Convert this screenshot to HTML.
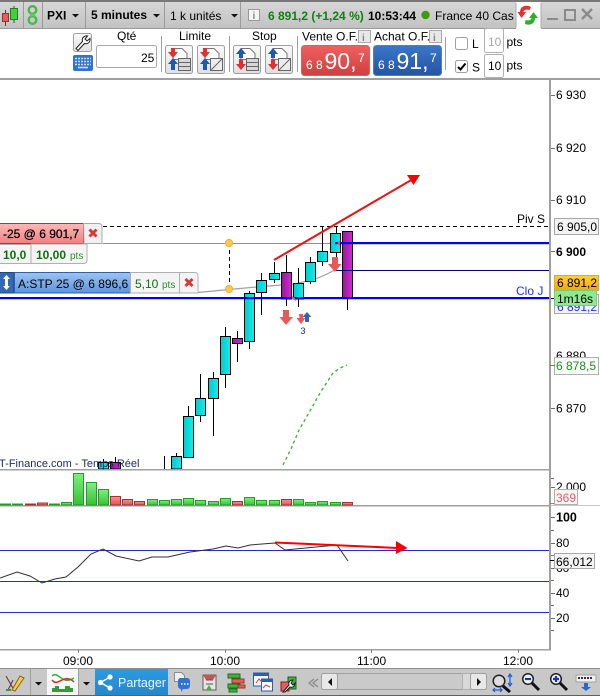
<!DOCTYPE html>
<html><head><meta charset="utf-8">
<style>
html,body{margin:0;padding:0;background:#fff;width:600px;height:696px;overflow:hidden}
svg{display:block;font-family:"Liberation Sans",sans-serif;font-size:12px}
text{fill:#000}
</style></head><body>
<svg width="600" height="696" viewBox="0 0 600 696" xmlns="http://www.w3.org/2000/svg">
<defs>
<linearGradient id="bar" x1="0" y1="0" x2="0" y2="1"><stop offset="0" stop-color="#d8d8d8"/><stop offset="1" stop-color="#c2c2c2"/></linearGradient>
<linearGradient id="cy" x1="0" y1="0" x2="1" y2="0"><stop offset="0" stop-color="#00cccc"/><stop offset="1" stop-color="#18eaea"/></linearGradient>
<linearGradient id="mg" x1="0" y1="0" x2="1" y2="0"><stop offset="0" stop-color="#98189c"/><stop offset="1" stop-color="#d02cd0"/></linearGradient>
<linearGradient id="gv" x1="0" y1="0" x2="0" y2="1"><stop offset="0" stop-color="#80ee80"/><stop offset="1" stop-color="#38c038"/></linearGradient>
<linearGradient id="rv" x1="0" y1="0" x2="0" y2="1"><stop offset="0" stop-color="#f89090"/><stop offset="1" stop-color="#d85858"/></linearGradient>
<linearGradient id="redb" x1="0" y1="0" x2="0" y2="1"><stop offset="0" stop-color="#f06060"/><stop offset="1" stop-color="#d04040"/></linearGradient>
<linearGradient id="blub" x1="0" y1="0" x2="0" y2="1"><stop offset="0" stop-color="#3c76c8"/><stop offset="1" stop-color="#2454a4"/></linearGradient>
<linearGradient id="ordr" x1="0" y1="0" x2="0" y2="1"><stop offset="0" stop-color="#ffb8b8"/><stop offset="1" stop-color="#f08080"/></linearGradient>
<linearGradient id="ordb" x1="0" y1="0" x2="0" y2="1"><stop offset="0" stop-color="#9cc4f0"/><stop offset="1" stop-color="#5c94e0"/></linearGradient>
<linearGradient id="btn" x1="0" y1="0" x2="0" y2="1"><stop offset="0" stop-color="#fafafa"/><stop offset="1" stop-color="#e0e0e0"/></linearGradient>
<linearGradient id="ylw" x1="0" y1="0" x2="0" y2="1"><stop offset="0" stop-color="#ffd040"/><stop offset="1" stop-color="#f0a800"/></linearGradient>
<linearGradient id="share" x1="0" y1="0" x2="0" y2="1"><stop offset="0" stop-color="#2e9ae0"/><stop offset="1" stop-color="#2288d0"/></linearGradient>
</defs>

<!-- top bar -->
<rect x="0" y="0" width="600" height="29" fill="url(#bar)"/>
<rect x="0" y="0" width="600" height="2" fill="#787878"/>
<rect x="0" y="28" width="516" height="1" fill="#9a9a9a"/>
<rect x="541" y="28" width="59" height="1" fill="#9a9a9a"/>
<g stroke="#9a9a9a"><path d="M23.500 2V28M42.500 2V28M85.500 2V28M164.500 2V28M240.500 2V28"/></g>
<!-- candle icon -->
<g stroke="#444" stroke-width="1"><path d="M5.500 10V26M14 6V23"/></g>
<rect x="2.500" y="13.500" width="6" height="8" fill="#e06060" stroke="#a03030"/>
<rect x="10.500" y="8.500" width="7" height="11" fill="#40d040" stroke="#208020"/>
<!-- link icon -->
<g fill="none" stroke="#48b848" stroke-width="2.400"><circle cx="32.500" cy="10" r="3.800"/><circle cx="32.500" cy="20" r="3.800"/></g>
<path d="M30 14l5 2M35 14l-5 2" stroke="#70c070" stroke-width="2"/>
<text x="47" y="19.500" font-weight="bold">PXI</text>
<path d="M72 14h7l-3.500 3.500z M153 14h7l-3.500 3.500z M231 14h7l-3.500 3.500z" fill="#111"/>
<text x="91" y="19" font-weight="bold">5 minutes</text>
<text x="170" y="20">1 k unités</text>
<rect x="248.500" y="9.500" width="11" height="11" fill="#f4f4f4" stroke="#999"/>
<text x="252.500" y="19" font-size="10" font-weight="bold" style="fill:#888">i</text>
<text x="268" y="20" font-weight="bold" style="fill:#108010">6 891,2 (+1,24 %)</text>
<text x="368" y="20" font-weight="bold">10:53:44</text>
<circle cx="425.500" cy="15" r="4.200" fill="#409a10"/>
<text x="435" y="20">France 40 Cas</text>
<!-- refresh tab -->
<rect x="516" y="2" width="25" height="28" fill="#fff"/>
<path d="M516 3V28M541 3V28" stroke="#aaa"/>
<path d="M531 7c-6-3-11 0-11 5h-2.500l4 6 4.500-6h-2.500c0-2 3-3 6-2z" fill="#e83030"/>
<path d="M525 24c6 2 10-1 10-6h3l-4.500-6-4.500 6h2.500c0 2-3 3-6 2z" fill="#28b428"/>
<!-- window buttons -->
<rect x="547" y="18" width="11" height="2" fill="#8a8a8a"/>
<rect x="565" y="10" width="10" height="10" fill="none" stroke="#8a8a8a" stroke-width="2"/>
<path d="M582 9l10 10M592 9l-10 10" stroke="#8a8a8a" stroke-width="2.400"/>

<!-- order toolbar -->
<rect x="73.500" y="33.500" width="18" height="18" rx="2" fill="url(#btn)" stroke="#a0a0a0"/>
<path d="M76 48.500l6.500-7c-1-3.500 1.500-6 5-5.500l-2.500 3 2 2 3-2.500c.5 3.500-2 6-5.500 5l-6.500 7z" fill="#fff" stroke="#222" stroke-width="1"/>
<rect x="73" y="55" width="20" height="16" rx="2" fill="#2f74d0"/>
<g stroke="#cfe0f8" stroke-width="1.600" stroke-dasharray="2 1"><path d="M75 58.500h16M75 61.500h16M75 64.500h16"/><path d="M78 67.500h10" stroke-dasharray="none"/></g>
<text x="117" y="40">Qté</text>
<rect x="96.500" y="45.500" width="60" height="22" rx="2" fill="#fff" stroke="#a8a8a8"/>
<text x="141" y="62">25</text>
<path d="M161.500 36V72M229.500 36V72M297.500 36V72M445.500 37V70" stroke="#a0a0a0"/>
<text x="179" y="40">Limite</text>
<text x="252" y="40">Stop</text>
<g>
<rect x="165.500" y="45.500" width="27" height="28" rx="2" fill="url(#btn)" stroke="#a0a0a0"/>
<path d="M173 48.500h9l5 5v6h-14z" fill="#fff" stroke="#777"/>
<path d="M168 52h3v-4h4v4h3l-5 6z" fill="#e03030"/>
<path d="M168 64l5-6 5 6h-3v6h-4v-6z" fill="#1c5cb0"/>
<rect x="178.500" y="58.500" width="12" height="12" fill="#d8d8d8" stroke="#666"/><path d="M178 62.500h12M178 66.500h12" stroke="#666"/>
</g>
<g>
<rect x="197.500" y="45.500" width="27" height="28" rx="2" fill="url(#btn)" stroke="#a0a0a0"/>
<path d="M205 48.500h9l5 5v6h-14z" fill="#fff" stroke="#777"/>
<path d="M200 52h3v-4h4v4h3l-5 6z" fill="#e03030"/>
<path d="M200 64l5-6 5 6h-3v6h-4v-6z" fill="#1c5cb0"/>
<rect x="210.500" y="58.500" width="12" height="12" fill="#ececec" stroke="#666"/><path d="M211 70l11-11" stroke="#666"/>
</g>
<g>
<rect x="233.500" y="45.500" width="27" height="28" rx="2" fill="url(#btn)" stroke="#a0a0a0"/>
<path d="M241 48.500h9l5 5v6h-14z" fill="#fff" stroke="#777"/>
<path d="M236 54l5-6 5 6h-3v4h-4v-4z" fill="#1c5cb0"/>
<path d="M236 64h3v-5h4v5h3l-5 6z" fill="#e03030"/>
<rect x="246.500" y="58.500" width="12" height="12" fill="#d8d8d8" stroke="#666"/><path d="M246 62.500h12M246 66.500h12" stroke="#666"/>
</g>
<g>
<rect x="265.500" y="45.500" width="27" height="28" rx="2" fill="url(#btn)" stroke="#a0a0a0"/>
<path d="M273 48.500h9l5 5v6h-14z" fill="#fff" stroke="#777"/>
<path d="M268 54l5-6 5 6h-3v4h-4v-4z" fill="#1c5cb0"/>
<path d="M268 64h3v-5h4v5h3l-5 6z" fill="#e03030"/>
<rect x="278.500" y="58.500" width="12" height="12" fill="#ececec" stroke="#666"/><path d="M279 70l11-11" stroke="#666"/>
</g>
<text x="302" y="40.500">Vente O.F.</text>
<rect x="358.500" y="30.500" width="12" height="12" fill="#e8e8e8" stroke="#aaa"/><text x="362" y="41" font-size="10" font-weight="bold" style="fill:#888">i</text>
<text x="374" y="40.500">Achat O.F.</text>
<rect x="429.500" y="30.500" width="12" height="12" fill="#e8e8e8" stroke="#aaa"/><text x="433" y="41" font-size="10" font-weight="bold" style="fill:#888">i</text>
<rect x="301.500" y="45.500" width="68" height="30" rx="3" fill="url(#redb)" stroke="#d86060"/>
<rect x="373.500" y="45.500" width="68" height="30" rx="3" fill="url(#blub)" stroke="#5080c0"/>
<text x="306" y="69" style="fill:#fff" font-size="12">6</text><text x="316" y="69" style="fill:#fff" font-size="12">8</text>
<text x="324.500" y="69" style="fill:#fff" font-size="23">90,</text><text x="358" y="62" style="fill:#fff" font-size="12">7</text>
<text x="378" y="69" style="fill:#fff" font-size="12">6</text><text x="388" y="69" style="fill:#fff" font-size="12">8</text>
<text x="396.500" y="69" style="fill:#fff" font-size="23">91,</text><text x="430" y="62" style="fill:#fff" font-size="12">7</text>
<rect x="455.500" y="37.500" width="12" height="12" rx="2" fill="#fff" stroke="#a0a0a0"/>
<text x="472" y="48">L</text>
<rect x="484.500" y="28.500" width="19" height="24" rx="2" fill="#fff" stroke="#b0b0b0"/>
<text x="488" y="46" style="fill:#a8a8a8">10</text>
<text x="506.500" y="46">pts</text>
<rect x="455.500" y="60.500" width="12" height="12" rx="2" fill="#fff" stroke="#a0a0a0"/>
<path d="M458 67l2.500 2.500 5-6" fill="none" stroke="#000" stroke-width="2"/>
<text x="472" y="71.500">S</text>
<rect x="484.500" y="54.500" width="19" height="23" rx="2" fill="#fff" stroke="#b0b0b0"/>
<text x="488" y="70">10</text>
<text x="506.500" y="69.500">pts</text>
<rect x="0" y="78" width="600" height="2" fill="#a0a0a0"/>

<!-- chart lines -->
<path d="M103 226.500H549" stroke="#000" stroke-dasharray="4 3"/>
<path d="M103 243.500H335" stroke="#909090"/>
<path d="M198 292.500L229 289.500L262 286.500L295 284L315 279L325 275L335 270" fill="none" stroke="#a0a0a0" stroke-width="1.200"/>
<path d="M229.500 243V289" stroke="#000" stroke-dasharray="4 3"/>
<circle cx="229" cy="243" r="3.600" fill="#fcc84c" stroke="#e8b040"/>
<circle cx="229" cy="289" r="3.600" fill="#fcc84c" stroke="#e8b040"/>

<!-- wicks -->
<g stroke="#000" stroke-width="1">
<path d="M103.500 459V469M115.500 457V469M164.500 456V469M176.500 453V456M188.500 406V416M200.500 374V422M213.500 372V436M225.500 327V388M237.500 331V362M249.500 291V349M261.500 273V315M274.500 262V283M286.500 255V306M298.500 268V307M310.500 257V284M322.500 226V266M336.500 226V262M347.500 298V310"/>
</g>
<!-- bodies -->
<g stroke="#000" stroke-width="1">
<g fill="url(#cy)">
<rect x="98.500" y="462.500" width="10" height="6.500"/>
<rect x="171.500" y="456.500" width="10" height="12.500"/>
<rect x="183.500" y="416.500" width="10" height="41"/>
<rect x="195.500" y="398.500" width="10" height="17"/>
<rect x="208.500" y="378.500" width="10" height="20"/>
<rect x="220.500" y="336.500" width="10" height="38"/>
<rect x="244.500" y="293.500" width="10" height="48"/>
<rect x="256.500" y="280.500" width="10" height="12"/>
<rect x="269.500" y="273.500" width="10" height="6"/>
<rect x="293.500" y="283.500" width="10" height="15.500"/>
<rect x="305.500" y="262.500" width="10" height="19"/>
<rect x="317.500" y="251.500" width="10" height="10"/>
<rect x="330.500" y="233.500" width="10" height="19"/>
</g>
<g fill="url(#mg)">
<rect x="110.500" y="462.500" width="10" height="6.500"/>
<rect x="232.500" y="338.500" width="10" height="5"/>
<rect x="281.500" y="272.500" width="10" height="26.500"/>
<rect x="342.500" y="231.500" width="10" height="66.500"/>
</g>
</g>

<!-- horizontal levels -->
<rect x="0" y="297" width="549" height="2.200" fill="#0000f0"/>
<rect x="335" y="242" width="214" height="2.200" fill="#0000f0"/>
<path d="M335 270.500H549" stroke="#000080"/>

<!-- trade lines -->
<path d="M274 260L413 179" stroke="#f01010" stroke-width="2" fill="none"/>
<path d="M407 175H420L413.500 185z" fill="#f80000"/>
<path d="M283 465L291 449L299 430L310 411L320 393L333 373L340 368L347 365" fill="none" stroke="#30b030" stroke-width="1.300" stroke-dasharray="3 3"/>

<!-- arrows -->
<path d="M283 310h6v7h4l-7 8-6.500-8h3.500z" fill="#e85858"/>
<path d="M299 314h4v4h2.500l-4.500 6-4.500-6h3z" fill="#e85858"/>
<path d="M307 312l4.500 5h-2.500v5h-4v-5h-2.500z" fill="#3068b0"/>
<path d="M332 257h6v7h3.500l-6.500 8-7-8h4z" fill="#e85858"/>
<path d="M292 296l3 2 1 3-4-2z" fill="#e85858"/>
<path d="M340 241l-3 2 3 3z" fill="#e85858"/>
<text x="300.500" y="334" font-size="9" style="fill:#203050">3</text>

<!-- order label 1 -->
<rect x="-2" y="223.500" width="85.500" height="20" fill="url(#ordr)" stroke="#b83030"/>
<text x="3" y="238" stroke="#000" stroke-width=".25">-25 @ 6 901,7</text>
<path d="M83.500 223.500H99a3 3 0 0 1 3 3V243.500H84z" fill="#f0f0f0" stroke="#a8a8a8"/>
<path d="M89.500 229.500l7 7M96.500 229.500l-7 7" stroke="#d83838" stroke-width="3"/>
<path d="M-2 244.500H84V263.500H-2z" fill="#f4f4f4" stroke="#b0b0b0"/>
<path d="M31 244H87V260a3 3 0 0 1-3 3.500H31z" fill="#f4f4f4" stroke="#b0b0b0"/>
<text x="3" y="259" style="fill:#107010" font-weight="bold">10,0</text>
<text x="36" y="259" style="fill:#107010" font-weight="bold">10,00</text>
<text x="70" y="259" style="fill:#28902c" font-size="10">pts</text>

<!-- order label 2 -->
<rect x="-2" y="272.500" width="16" height="20.500" fill="#3468b4" stroke="#204880"/>
<path d="M6.500 275l3.500 4h-2v7h2l-3.500 4-3.500-4h2v-7h-2z" fill="#fff"/>
<rect x="14.500" y="272.500" width="116" height="20.500" fill="url(#ordb)" stroke="#3060a8"/>
<text x="18" y="288">A:STP</text><text x="56" y="288">25 @ 6 896,6</text>
<path d="M130.500 272.500H195a3 3 0 0 1 3 3V293H130.500z" fill="#f4f4f4" stroke="#b0b0b0"/>
<path d="M179.500 272.500V293" stroke="#b0b0b0"/>
<text x="135" y="288" style="fill:#107010">5,10</text><text x="162" y="288" font-size="10" style="fill:#28902c">pts</text>
<path d="M185.500 279l7 7M192.500 279l-7 7" stroke="#d83838" stroke-width="3"/>

<text x="517" y="223">Piv S</text>
<text x="516" y="295" style="fill:#2030f0">Clo J</text>

<!-- right axis -->
<rect x="549" y="80" width="2" height="569" fill="#a0a0a0"/>
<path d="M551 95.500h4M551 148.500h4M551 200.500h4M551 251.500h4M551 408.500h4" stroke="#707070"/>
<path d="M551 298.500h4" stroke="#000"/>
<text x="556" y="99">6 930</text>
<text x="556" y="152">6 920</text>
<text x="556" y="204">6 910</text>
<text x="556" y="256" font-weight="bold">6 900</text>
<text x="556" y="360">6 880</text>
<text x="556" y="412.500">6 870</text>
<rect x="554.500" y="218.500" width="44" height="16" fill="#f4f4f4" stroke="#a8a8a8"/>
<text x="557" y="231">6 905,0</text>
<rect x="554.500" y="294.500" width="44" height="19" fill="#f4f4f4" stroke="#a8a8a8"/>
<text x="557" y="311" style="fill:#2030f0">6 891,2</text>
<rect x="554.500" y="275.500" width="44" height="15" fill="url(#ylw)" stroke="#e0a820"/>
<text x="557" y="287">6 891,2</text>
<rect x="554.500" y="290.500" width="42" height="15" fill="#90e890" stroke="#80c880"/>
<text x="557" y="303">1m16s</text>
<rect x="554.500" y="357.500" width="44" height="17" fill="#fafafa" stroke="#b0b0b0"/>
<path d="M550 365.500h5" stroke="#30a030"/>
<text x="556" y="370" style="fill:#209020">6 878,5</text>

<!-- separators -->
<rect x="0" y="469" width="549" height="1.500" fill="#a0a0a0"/>
<rect x="0" y="505" width="549" height="1.500" fill="#a0a0a0"/>
<rect x="551" y="505" width="49" height="1" fill="#c8c8c8"/>
<rect x="549" y="469" width="2" height="37" fill="#a0a0a0"/>

<!-- volumes -->
<g stroke-width="1">
<g fill="url(#gv)" stroke="#20a020">
<rect x="0.500" y="504" width="10" height="1"/><rect x="12.500" y="504" width="10" height="1"/>
<rect x="49.500" y="504" width="10" height="1"/><rect x="61.500" y="502.500" width="10" height="2.500"/>
<rect x="73.500" y="473.500" width="10" height="31.500"/><rect x="86.500" y="482.500" width="10" height="22.500"/><rect x="98.500" y="489.500" width="10" height="15.500"/>
<rect x="147.500" y="499.500" width="10" height="5.500"/><rect x="159.500" y="500.500" width="10" height="4.500"/><rect x="171.500" y="499.500" width="10" height="5.500"/><rect x="183.500" y="498.500" width="10" height="6.500"/><rect x="195.500" y="500.500" width="10" height="4.500"/><rect x="208.500" y="501.500" width="10" height="3.500"/><rect x="220.500" y="498.500" width="10" height="6.500"/>
<rect x="244.500" y="497.500" width="10" height="7.500"/><rect x="256.500" y="500.500" width="10" height="4.500"/><rect x="269.500" y="500.500" width="10" height="4.500"/><rect x="293.500" y="499.500" width="10" height="5.500"/><rect x="305.500" y="502.500" width="10" height="2.500"/><rect x="317.500" y="501.500" width="10" height="3.500"/><rect x="330.500" y="502.500" width="10" height="2.500"/>
</g>
<g fill="url(#rv)" stroke="#a83030">
<rect x="25.500" y="504" width="10" height="1"/><rect x="37.500" y="503" width="10" height="2"/>
<rect x="110.500" y="496.500" width="10" height="8.500"/><rect x="122.500" y="499.500" width="10" height="5.500"/><rect x="134.500" y="501.500" width="10" height="3.500"/>
<rect x="232.500" y="501.500" width="10" height="3.500"/><rect x="281.500" y="499.500" width="10" height="5.500"/><rect x="342.500" y="502.500" width="10" height="2.500"/>
</g>
</g>
<path d="M551 478.500h3M551 487.500h4" stroke="#707070"/>
<path d="M550 503.500h5" stroke="#e06060"/>
<text x="556" y="491">2 000</text>
<rect x="554.500" y="489.500" width="23" height="15" fill="#f4f4f4" stroke="#b0b0b0"/>
<text x="556" y="502" style="fill:#e06070">369</text>

<!-- RSI -->
<path d="M0 550.500H549M0 581.500H549M0 612.500H549" stroke="#2828d8" stroke-width="1"/>
<polyline points="0,578 17,572 30,576 42,583 55,579 66,577 78,567 91,554 103,549 116,556 139,561 152,557 168,557 190,552 213,549 226,546 238,548 250,545 275,543 285,550 337,545 348,561" fill="none" stroke="#303030" stroke-width="1"/>
<path d="M275 542.500L398 548" stroke="#f80000" stroke-width="2"/>
<path d="M396 541L407.500 548L396 554z" fill="#f80000"/>
<rect x="549" y="506" width="2" height="143" fill="#a0a0a0"/>
<path d="M551 517.500h4M551 530.500h3M551 543.500h4M551 555.500h3M551 568.500h4M551 580.500h3M551 593.500h4M551 605.500h3M551 618.500h4M551 630.500h3" stroke="#707070"/>
<path d="M550 560.500h5" stroke="#000"/>
<text x="556" y="521.500" font-weight="bold" font-size="12.500">100</text>
<text x="556" y="547">80</text>
<text x="556" y="572">60</text>
<text x="556" y="597">40</text>
<text x="556" y="622">20</text>
<rect x="554.500" y="553.500" width="40" height="15" fill="#f4f4f4" stroke="#a8a8a8"/>
<text x="556" y="566">66,012</text>

<!-- watermark -->
<text x="-4" y="467" font-size="11" style="fill:#1a2a5a">IT-Finance.com - Temps Réel</text>

<!-- bottom axis -->
<rect x="0" y="649" width="551" height="1.500" fill="#a0a0a0"/>
<path d="M78.500 650v3M225.500 650v3M371.500 650v3M518.500 650v3" stroke="#808080"/>
<text x="63" y="665">09:00</text><text x="210" y="665">10:00</text><text x="357" y="665">11:00</text><text x="503" y="665">12:00</text>

<!-- bottom toolbar -->
<rect x="0" y="668" width="600" height="28" fill="#c8c8c8"/>
<rect x="0" y="668" width="600" height="1" fill="#909090"/>
<rect x="0" y="695" width="600" height="1" fill="#606060"/>
<path d="M30.500 669V695" stroke="#a0a0a0"/>
<path d="M6 676l8 14M8 690l5-10" stroke="#603030" fill="none"/>
<path d="M12 690l8-14 4 2-9 13z" fill="#f0d040" stroke="#906020"/>
<path d="M6 690h5" stroke="#30a030" stroke-width="2"/>
<path d="M35 682h7l-3.500 3.500z" fill="#111"/>
<rect x="47" y="669" width="31" height="26" fill="#f8f8f8"/>
<path d="M78.500 669V695" stroke="#a0a0a0"/>
<path d="M52 676c6-6 10 10 22 2" stroke="#30b030" fill="none" stroke-width="1.500"/>
<path d="M52 680c6 8 12-8 22 2" stroke="#d83030" fill="none" stroke-width="1.500"/>
<path d="M52 688h3v-2h4v3h6v-3h5v2h3v4H52z" fill="#30a030"/>
<path d="M83 682h7l-3.500 3.500z" fill="#111"/>
<rect x="95" y="669" width="73" height="26" fill="url(#share)"/>
<g fill="#fff"><circle cx="100.500" cy="682.500" r="2.600"/><circle cx="110" cy="677" r="2.600"/><circle cx="110" cy="688" r="2.600"/></g>
<path d="M110 677l-9.500 5.500L110 688" stroke="#fff" fill="none" stroke-width="1.400"/>
<text x="118" y="687" font-size="12.500" style="fill:#eaf4fc">Partager</text>
<!-- small icons -->
<path d="M174.500 672.500h7l3 3v6h-10z" fill="#f0f0f0" stroke="#8090a0"/>
<path d="M178 680a3 3 0 0 1 3-2h6a3 3 0 0 1 3 3v5a3 3 0 0 1-3 3h-4l-2 3v-3a3 3 0 0 1-3-3z" fill="#2f74d0"/>
<path d="M181 684h1.500M184 684h1.500M187 684h1.500" stroke="#fff" stroke-width="1.500"/>
<rect x="203" y="675" width="13" height="15" fill="#e4e4e4" stroke="#606060"/>
<path d="M203 675h13l-3 5h-7z" fill="#d05050"/><path d="M206 690l3-5 3 5z" fill="#40b040"/><path d="M206 680h7M206 684h7" stroke="#555"/>
<g stroke="#1e6e1e"><rect x="228" y="674" width="12" height="4" fill="#38b838"/><rect x="228" y="684" width="12" height="4" fill="#38b838"/><rect x="229" y="689" width="8" height="3" fill="#38b838"/></g>
<g stroke="#a03030"><rect x="232" y="679" width="12" height="4" fill="#e06060"/><rect x="238" y="685" width="7" height="3" fill="#e06060"/></g>
<rect x="253.500" y="673" width="15" height="13" fill="#f4f8ff" stroke="#2860b0"/><rect x="253.500" y="673" width="15" height="3" fill="#2860b0"/>
<rect x="261.500" y="679" width="11" height="12" fill="#f4f8ff" stroke="#2860b0"/><rect x="261.500" y="679" width="11" height="3" fill="#2860b0"/>
<path d="M256 683l3-4 3 3M263 688l3-3 4 2" stroke="#d04040" fill="none"/>
<rect x="288" y="677" width="8" height="12" fill="#38b838" stroke="#206020"/>
<rect x="281" y="682" width="8" height="9" fill="#e06060" stroke="#802020"/>
<path d="M283 692l6-7c-1-3 1-5 4-5l-2 3 2 2 2-2c0 3-2 5-5 4l-5 5z" fill="#fff" stroke="#222"/>
<!-- scrollbar -->
<path d="M314 679l-5 4 5 4M318 679l-5 4 5 4" stroke="#888" fill="none" stroke-width="1.200"/>
<rect x="321.500" y="673.500" width="165" height="16" rx="2" fill="#cacaca" stroke="#a0a0a0"/>
<rect x="321.500" y="673.500" width="16" height="16" rx="2" fill="#e8e8e8" stroke="#a0a0a0"/>
<rect x="462.500" y="673.500" width="8" height="16" fill="#d8d8d8" stroke="#b0b0b0"/>
<rect x="470.500" y="673.500" width="16" height="16" rx="2" fill="#e8e8e8" stroke="#a0a0a0"/>
<path d="M332 678l-4 4 4 4z" fill="#111"/>
<path d="M477 678l4 4-4 4z" fill="#111"/>
<!-- zoom icons -->
<circle cx="499" cy="681" r="5.800" fill="#ddd" stroke="#222" stroke-width="1.500"/>
<path d="M503 686l7 6" stroke="#111" stroke-width="3"/>
<path d="M510 675v10M508 677l2-3 2 3M508 683l2 3 2-3" stroke="#1c5ce0" fill="none" stroke-width="1.200"/>
<path d="M493 690h9M495 688l-2 2 2 2M500 688l2 2-2 2" stroke="#1c5ce0" fill="none" stroke-width="1.200"/>
<circle cx="528" cy="679" r="5.300" fill="#f4f4f4" stroke="#222" stroke-width="1.500"/>
<path d="M525 679h6" stroke="#1030e0" stroke-width="2.200"/>
<path d="M532 683l7 7" stroke="#111" stroke-width="3"/>
<circle cx="556" cy="679" r="5.300" fill="#f4f4f4" stroke="#222" stroke-width="1.500"/>
<path d="M553 679h6M556 676v6" stroke="#1030e0" stroke-width="2.200"/>
<path d="M560 683l7 7" stroke="#111" stroke-width="3"/>
<rect x="576" y="675" width="20" height="7" rx="1" fill="#f0f0f0" stroke="#a0a0a0"/>
<path d="M578 678h2M581 678h2M584 678h2M587 678h2M590 678h2" stroke="#333" stroke-width="2"/>
<path d="M584 683h4v4h3l-5 4-5-4h3z" fill="#2a68d0"/>
</svg>
</body></html>
